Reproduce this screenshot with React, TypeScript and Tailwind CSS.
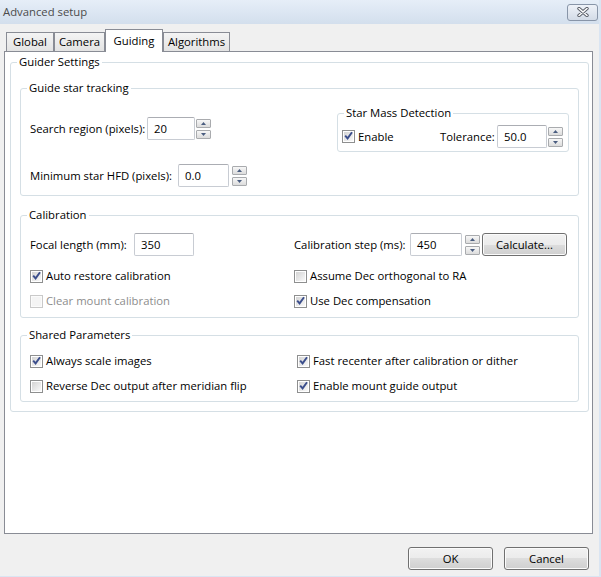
import React from 'react';

type Kids = { children?: React.ReactNode };

const GroupBox = ({ title, className = '', children }: { title: string; className?: string } & Kids) => (
  <fieldset className={`border border-[#d5dfe5] rounded-[3px] ${className}`}>
    <legend className="ml-[6px] px-[2px] leading-[16px]">{title}</legend>
    {children}
  </fieldset>
);

const CheckBox = ({ label, checked = false, disabled = false, className = '' }: { label: string; checked?: boolean; disabled?: boolean; className?: string }) => (
  <div className={`flex items-center h-[20px] ${className}`}>
    <span
      className={`w-[13px] h-[13px] border p-px ${disabled ? 'border-[#c9c9c9] bg-[#fbfbfb]' : 'border-[#8e8f8f] bg-white'}`}
    >
      <span
        className={`relative flex items-center justify-center w-full h-full ${disabled ? 'bg-[#f4f4f4]' : 'bg-gradient-to-br from-[#d4d4d4] to-[#f9f9f9]'}`}
      >
        {checked && (
          <svg width="9" height="9" viewBox="0 0 9 9" className="absolute -top-px left-0">
            <path d="M1.2 4.6 L3.6 7.4 L8 1.2" fill="none" stroke="#3b4e8c" strokeWidth="1.9" />
          </svg>
        )}
      </span>
    </span>
    <span className={`ml-[3px] ${disabled ? 'text-[#8d8d8d]' : 'text-black'}`}>{label}</span>
  </div>
);

const TextBox = ({ value, className = '' }: { value: string; className?: string }) => (
  <div
    className={`h-[23px] flex items-center pl-[6px] bg-white border border-[#c8ccd3] border-t-[#abadb3] rounded-[2px] ${className}`}
  >
    {value}
  </div>
);

const SpinHalf = ({ up = false }: { up?: boolean }) => (
  <div className="h-[9px] flex items-center justify-center border border-[#a9abae] rounded-[1px] bg-gradient-to-b from-[#f7f7f7] to-[#dcdcdc]">
    <svg width="5" height="3" viewBox="0 0 5 3">
      <path d={up ? 'M0 3 L2.5 0 L5 3 Z' : 'M0 0 L5 0 L2.5 3 Z'} fill="#4a5d80" />
    </svg>
  </div>
);

const Spin = ({ className = '' }: { className?: string }) => (
  <div className={`flex flex-col gap-[2px] w-[15px] ${className}`}>
    <SpinHalf up />
    <SpinHalf />
  </div>
);

const WinButton = ({ label, className = '' }: { label: string; className?: string }) => (
  <div
    className={`w-[85px] h-[23px] flex items-center justify-center border border-[#707070] rounded-[3px] bg-[linear-gradient(#f2f2f2,#ebebeb_50%,#dddddd_50%,#cfcfcf)] shadow-[inset_0_0_0_1px_#fbfbfb] ${className}`}
  >
    {label}
  </div>
);

const Tab = ({ label, selected = false, className = '' }: { label: string; selected?: boolean; className?: string }) => (
  <div
    className={
      selected
        ? `relative z-10 -mb-px h-[23px] flex items-center justify-center bg-white border border-b-0 border-[#898c95] ${className}`
        : `h-[19px] flex items-center justify-center bg-gradient-to-b from-[#f4f4f4] to-[#e3e3e3] border border-b-0 border-[#898c95] ${className}`
    }
  >
    {label}
  </div>
);

const App = () => {
  return (
    <div className="w-[601px] h-[577px] flex flex-col bg-[#f0f0f0] border-r-2 border-b border-[#dae5f2] text-black text-[11.3px] leading-[16px] font-['Segoe_UI','Open_Sans',sans-serif]">
      <div className="h-[24px] flex items-center justify-between pl-[3px] pr-px bg-gradient-to-b from-[#e6eef8] to-[#d3dfed]">
        <span className="text-[#4b4b4b]">Advanced setup</span>
        <div className="w-[31px] h-[17px] flex items-center justify-center border border-[#8895a8] rounded-[3px] bg-gradient-to-b from-[#eef2f8] to-[#d3dbe7]">
          <svg width="14" height="10" viewBox="0 0 14 10">
            <path d="M3 1.5 L11 8.5 M11 1.5 L3 8.5" stroke="#575c66" strokeWidth="3.4" strokeLinecap="round" />
            <path d="M3 1.5 L11 8.5 M11 1.5 L3 8.5" stroke="#ffffff" strokeWidth="1.6" strokeLinecap="round" />
          </svg>
        </div>
      </div>

      <div className="pt-[5px] pl-[6px] flex items-end">
        <Tab label="Global" className="w-[48px]" />
        <Tab label="Camera" className="w-[51px]" />
        <Tab label="Guiding" selected className="w-[58px]" />
        <Tab label="Algorithms" className="w-[67px]" />
      </div>

      <div className="ml-[4px] w-[589px] h-[483px] pt-[2px] bg-white border border-[#898c95]">
        <GroupBox title="Guider Settings" className="ml-[5px] w-[579px] pb-[9px]">
          <GroupBox title="Guide star tracking" className="ml-[9px] mt-[10px] w-[559px]">
            <div className="flex justify-between">
              <div className="pl-[9px] pt-[21px] pb-[8px]">
                <div className="flex items-center h-[23px]">
                  <span className="w-[117px]">Search region (pixels):</span>
                  <TextBox value="20" className="w-[48px]" />
                  <Spin className="ml-px" />
                </div>
                <div className="flex items-center h-[23px] mt-[24px]">
                  <span className="w-[148px]">Minimum star HFD (pixels):</span>
                  <TextBox value="0.0" className="w-[51px]" />
                  <Spin className="ml-[3px]" />
                </div>
              </div>
              <GroupBox title="Star Mass Detection" className="self-start mt-[9px] mr-[9px] w-[232px]">
                <div className="flex items-center pt-[4px] pb-[3px] pl-[4px] pr-[5px]">
                  <CheckBox label="Enable" checked />
                  <span className="ml-auto w-[57px]">Tolerance:</span>
                  <TextBox value="50.0" className="w-[50px]" />
                  <Spin className="ml-px" />
                </div>
              </GroupBox>
            </div>
          </GroupBox>

          <GroupBox title="Calibration" className="ml-[9px] mt-[11px] w-[559px] pb-[6px]">
            <div className="flex items-center h-[23px] mt-[10px] pl-[9px]">
              <span className="w-[104px]">Focal length (mm):</span>
              <TextBox value="350" className="w-[60px]" />
              <span className="ml-[100px] w-[116px]">Calibration step (ms):</span>
              <TextBox value="450" className="w-[52px]" />
              <Spin className="ml-[3px]" />
              <WinButton label="Calculate..." className="ml-[2px]" />
            </div>
            <div className="flex mt-[10px] pl-[9px]">
              <CheckBox label="Auto restore calibration" checked className="w-[264px]" />
              <CheckBox label="Assume Dec orthogonal to RA" />
            </div>
            <div className="flex mt-[5px] pl-[9px]">
              <CheckBox label="Clear mount calibration" disabled className="w-[264px]" />
              <CheckBox label="Use Dec compensation" checked />
            </div>
          </GroupBox>

          <GroupBox title="Shared Parameters" className="ml-[9px] mt-[9px] w-[559px] pb-[5px]">
            <div className="flex mt-[8px] pl-[9px]">
              <CheckBox label="Always scale images" checked className="w-[267px]" />
              <CheckBox label="Fast recenter after calibration or dither" checked />
            </div>
            <div className="flex mt-[5px] pl-[9px]">
              <CheckBox label="Reverse Dec output after meridian flip" className="w-[267px]" />
              <CheckBox label="Enable mount guide output" checked />
            </div>
          </GroupBox>
        </GroupBox>
      </div>

      <div className="mt-[13px] pr-[10px] flex justify-end gap-[11px]">
        <WinButton label="OK" />
        <WinButton label="Cancel" />
      </div>
    </div>
  );
};

export default App;
